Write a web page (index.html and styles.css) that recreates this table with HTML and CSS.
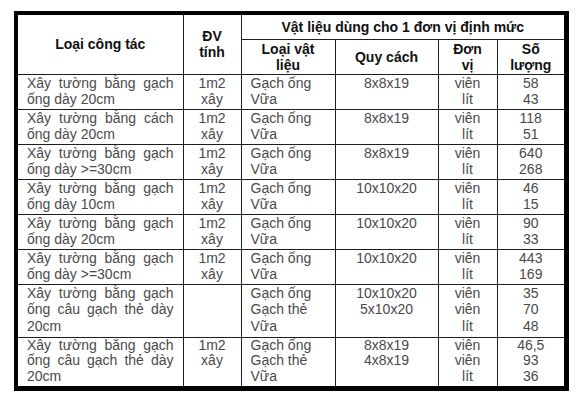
FILE: index.html
```html
<!DOCTYPE html>
<html lang="vi">
<head>
<meta charset="utf-8">
<link rel="stylesheet" href="styles.css">
</head>
<body>
<div class="frame">
<table class="norm">
<colgroup>
<col class="c1"><col class="c2"><col class="c3"><col class="c4"><col class="c5"><col class="c6">
</colgroup>
<thead>
<tr class="h1">
<th rowspan="2" class="el et">Loại công tác</th>
<th rowspan="2" class="et">ĐV<br>tính</th>
<th colspan="4" class="et er">Vật liệu dùng cho 1 đơn vị định mức</th>
</tr>
<tr class="h2">
<th>Loại vật<br>liệu</th>
<th>Quy cách</th>
<th>Đơn<br>vị</th>
<th class="er">Số<br>lượng</th>
</tr>
</thead>
<tbody>
<tr class="r2">
<td class="el job">Xây tường bằng gạch ống dày 20cm</td>
<td class="ctr">1m2<br>xây</td>
<td>Gạch ống<br>Vữa</td>
<td class="ctr">8x8x19</td>
<td class="ctr">viên<br>lít</td>
<td class="ctr er">58<br>43</td>
</tr>
<tr class="r2">
<td class="el job">Xây tường bằng cách ống dày 20cm</td>
<td class="ctr">1m2<br>xây</td>
<td>Gạch ống<br>Vữa</td>
<td class="ctr">8x8x19</td>
<td class="ctr">viên<br>lít</td>
<td class="ctr er">118<br>51</td>
</tr>
<tr class="r2">
<td class="el job">Xây tường bằng gạch ống dày &gt;=30cm</td>
<td class="ctr">1m2<br>xây</td>
<td>Gạch ống<br>Vữa</td>
<td class="ctr">8x8x19</td>
<td class="ctr">viên<br>lít</td>
<td class="ctr er">640<br>268</td>
</tr>
<tr class="r2">
<td class="el job">Xây tường bằng gạch ống dày 10cm</td>
<td class="ctr">1m2<br>xây</td>
<td>Gạch ống<br>Vữa</td>
<td class="ctr">10x10x20</td>
<td class="ctr">viên<br>lít</td>
<td class="ctr er">46<br>15</td>
</tr>
<tr class="r2">
<td class="el job">Xây tường bằng gạch ống dày 20cm</td>
<td class="ctr">1m2<br>xây</td>
<td>Gạch ống<br>Vữa</td>
<td class="ctr">10x10x20</td>
<td class="ctr">viên<br>lít</td>
<td class="ctr er">90<br>33</td>
</tr>
<tr class="r2">
<td class="el job">Xây tường bằng gạch ống dày &gt;=30cm</td>
<td class="ctr">1m2<br>xây</td>
<td>Gạch ống<br>Vữa</td>
<td class="ctr">10x10x20</td>
<td class="ctr">viên<br>lít</td>
<td class="ctr er">443<br>169</td>
</tr>
<tr class="r3a">
<td class="el job">Xây tường bằng gạch ống câu gạch thẻ dày 20cm</td>
<td class="ctr"></td>
<td>Gạch ống<br>Gạch thẻ<br>Vữa</td>
<td class="ctr">10x10x20<br>5x10x20</td>
<td class="ctr">viên<br>viên<br>lít</td>
<td class="ctr er">35<br>70<br>48</td>
</tr>
<tr class="r3b">
<td class="el eb job">Xây tường bằng gạch ống câu gạch thẻ dày 20cm</td>
<td class="ctr eb">1m2<br>xây</td>
<td class="eb">Gạch ống<br>Gạch thẻ<br>Vữa</td>
<td class="ctr eb">8x8x19<br>4x8x19</td>
<td class="ctr eb">viên<br>viên<br>lít</td>
<td class="ctr eb er">46,5<br>93<br>36</td>
</tr>
</tbody>
</table>
</div>
</body>
</html>
```

FILE: styles.css
```css
html, body {
  margin: 0;
  padding: 0;
  background: #ffffff;
}
body {
  padding: 11px 0 0 14px;
  font-family: "Liberation Sans", Arial, sans-serif;
}
.frame {
  width: 546px;
  height: 371px;
  border: 4px solid #000;
  border-right-width: 5px;
  border-bottom-width: 5px;
  overflow: hidden;
}
.norm {
  width: 546px;
  border-collapse: collapse;
  table-layout: fixed;
  font-size: 14px;
  line-height: 16.5px;
}
.c1 { width: 165px; }
.c2 { width: 58px; }
.c3 { width: 94px; }
.c4 { width: 103px; }
.c5 { width: 59px; }
.c6 { width: 67px; }
.norm th,
.norm td {
  border: 1px solid #1e1e1e;
  padding: 0;
}
.norm th {
  font-weight: bold;
  color: #111;
  text-align: center;
  vertical-align: middle;
  line-height: 16px;
}
.h1 { height: 24px; }
.h2 { height: 35px; }
.h1 th[colspan] { padding-top: 1px; }
.norm td {
  color: #4a4a4a;
  vertical-align: top;
  padding: 0 8px 0 9px;
}
.norm td.ctr {
  text-align: center;
  padding-left: 0;
  padding-right: 0;
}
.norm td.job {
  text-align: justify;
  padding-right: 9px;
}
.r2 { height: 35px; }
.r3a { height: 53px; }
.r3b { height: 49px; }
.r3b td { line-height: 15.8px; }
.norm .el { border-left: none; }
.norm .er { border-right: none; }
.norm .et { border-top: none; }
.norm .eb { border-bottom: none; }
```
